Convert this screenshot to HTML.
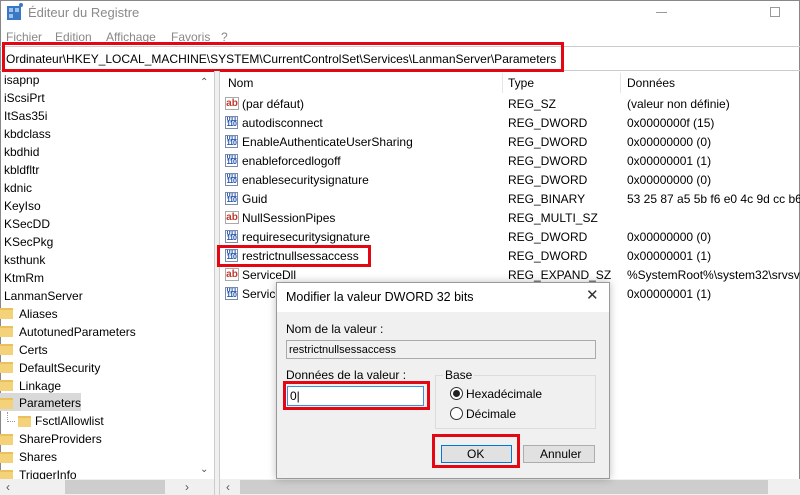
<!DOCTYPE html>
<html><head><meta charset="utf-8"><style>
*{margin:0;padding:0;box-sizing:border-box}
body{width:800px;height:495px;overflow:hidden;background:#fff;font-family:"Liberation Sans",sans-serif;font-size:12px;color:#000;position:relative}
.a{position:absolute;white-space:nowrap}
.t{line-height:16px}
.fold{position:absolute;width:13px;height:11px;background:#f3d27a;border-top:2px solid #e8c15a}
.ico{position:absolute;width:13px;height:13px;border:1px solid #7a8aa8;background:#fff;font-size:7px;line-height:5px;color:#1d4fa8;font-weight:bold;text-align:center;letter-spacing:-0.5px;overflow:hidden}
.ab{position:absolute;width:14px;height:13px;border:1px solid #aaa;background:#fff;color:#c0392b;font-size:10px;font-weight:bold;line-height:11px;text-align:center}
.red{position:absolute;border:3px solid #e30613}
</style></head><body>
<div class="a" style="left:0;top:0;width:800px;height:495px;border:1px solid #888"></div>
<div class="a" style="left:7px;top:6px;width:14px;height:14px;background:#3b78c4"></div>
<div class="a" style="left:9px;top:8px;width:4px;height:4px;background:#9cc3ee"></div>
<div class="a" style="left:15px;top:8px;width:4px;height:4px;background:#9cc3ee"></div>
<div class="a" style="left:9px;top:14px;width:4px;height:4px;background:#9cc3ee"></div>
<div class="a" style="left:19px;top:3px;width:4px;height:4px;background:#3b78c4;border-radius:2px"></div>
<div class="a t" style="left:28px;top:5px;font-size:13px;color:#8a8a8a">Éditeur du Registre</div>
<div class="a" style="left:656px;top:12px;width:11px;height:1px;background:#999"></div>
<div class="a" style="left:770px;top:7px;width:10px;height:10px;border:1px solid #999"></div>
<div class="a t" style="left:6px;top:29px;color:#888">Fichier</div>
<div class="a t" style="left:55px;top:29px;color:#888">Edition</div>
<div class="a t" style="left:106px;top:29px;color:#888">Affichage</div>
<div class="a t" style="left:171px;top:29px;color:#888">Favoris</div>
<div class="a t" style="left:221px;top:29px;color:#888">?</div>
<div class="a" style="left:0;top:46px;width:800px;height:1px;background:#ccc"></div>
<div class="a" style="left:0;top:70px;width:800px;height:1px;background:#ccc"></div>
<div class="a t" style="left:6px;top:51px">Ordinateur\HKEY_LOCAL_MACHINE\SYSTEM\CurrentControlSet\Services\LanmanServer\Parameters</div>
<div class="red" style="left:2px;top:42px;width:562px;height:30px"></div>
<!-- left tree -->
<div class="a t" style="left:4px;top:72px">isapnp</div>
<div class="a t" style="left:4px;top:90px">iScsiPrt</div>
<div class="a t" style="left:4px;top:108px">ItSas35i</div>
<div class="a t" style="left:4px;top:126px">kbdclass</div>
<div class="a t" style="left:4px;top:144px">kbdhid</div>
<div class="a t" style="left:4px;top:162px">kbldfltr</div>
<div class="a t" style="left:4px;top:180px">kdnic</div>
<div class="a t" style="left:4px;top:198px">KeyIso</div>
<div class="a t" style="left:4px;top:216px">KSecDD</div>
<div class="a t" style="left:4px;top:234px">KSecPkg</div>
<div class="a t" style="left:4px;top:252px">ksthunk</div>
<div class="a t" style="left:4px;top:270px">KtmRm</div>
<div class="a t" style="left:4px;top:288px">LanmanServer</div>
<div class="a" style="left:0;top:393px;width:81px;height:18px;background:#d9d9d9"></div>
<div class="fold" style="left:0;top:308px"></div><div class="a t" style="left:19px;top:306px">Aliases</div>
<div class="fold" style="left:0;top:326px"></div><div class="a t" style="left:19px;top:324px">AutotunedParameters</div>
<div class="fold" style="left:0;top:344px"></div><div class="a t" style="left:19px;top:342px">Certs</div>
<div class="fold" style="left:0;top:362px"></div><div class="a t" style="left:19px;top:360px">DefaultSecurity</div>
<div class="fold" style="left:0;top:380px"></div><div class="a t" style="left:19px;top:378px">Linkage</div>
<div class="fold" style="left:0;top:398px"></div><div class="a t" style="left:19px;top:395px">Parameters</div>
<div class="a" style="left:7px;top:412px;width:1px;height:10px;border-left:1px dotted #999"></div>
<div class="a" style="left:7px;top:421px;width:8px;height:1px;border-top:1px dotted #999"></div>
<div class="fold" style="left:18px;top:416px"></div><div class="a t" style="left:35px;top:413px">FsctlAllowlist</div>
<div class="fold" style="left:0;top:434px"></div><div class="a t" style="left:19px;top:431px">ShareProviders</div>
<div class="fold" style="left:0;top:452px"></div><div class="a t" style="left:19px;top:449px">Shares</div>
<div class="fold" style="left:0;top:470px"></div><div class="a t" style="left:19px;top:467px">TriggerInfo</div>
<div class="a" style="left:198px;top:72px;width:16px;height:408px;background:#fff"></div>
<div class="a t" style="left:200px;top:75px;font-size:10px;color:#555">&#8963;</div>
<div class="a t" style="left:200px;top:462px;font-size:10px;color:#555">&#8964;</div>
<div class="a" style="left:0;top:479px;width:214px;height:16px;background:#f0f0f0"></div>
<div class="a" style="left:65px;top:480px;width:100px;height:14px;background:#cdcdcd"></div>
<div class="a t" style="left:6px;top:479px;color:#555">&lsaquo;</div>
<div class="a t" style="left:185px;top:479px;color:#555">&rsaquo;</div>
<div class="a" style="left:214px;top:71px;width:6px;height:424px;background:#f0f0f0;border-left:1px solid #ccc;border-right:1px solid #ccc"></div>
<div class="a" style="left:502px;top:73px;width:1px;height:20px;background:#e5e5e5"></div>
<div class="a" style="left:620px;top:73px;width:1px;height:20px;background:#e5e5e5"></div>
<div class="a t" style="left:228px;top:75px">Nom</div>
<div class="a t" style="left:508px;top:75px">Type</div>
<div class="a t" style="left:627px;top:75px">Données</div>
<div class="ab" style="left:225px;top:97px">ab</div><div class="a t" style="left:242px;top:96px">(par défaut)</div><div class="a t" style="left:508px;top:96px">REG_SZ</div><div class="a t" style="left:627px;top:96px">(valeur non définie)</div>
<div class="ico" style="left:225px;top:116px">011<br>110</div><div class="a t" style="left:242px;top:115px">autodisconnect</div><div class="a t" style="left:508px;top:115px">REG_DWORD</div><div class="a t" style="left:627px;top:115px">0x0000000f (15)</div>
<div class="ico" style="left:225px;top:135px">011<br>110</div><div class="a t" style="left:242px;top:134px">EnableAuthenticateUserSharing</div><div class="a t" style="left:508px;top:134px">REG_DWORD</div><div class="a t" style="left:627px;top:134px">0x00000000 (0)</div>
<div class="ico" style="left:225px;top:154px">011<br>110</div><div class="a t" style="left:242px;top:153px">enableforcedlogoff</div><div class="a t" style="left:508px;top:153px">REG_DWORD</div><div class="a t" style="left:627px;top:153px">0x00000001 (1)</div>
<div class="ico" style="left:225px;top:173px">011<br>110</div><div class="a t" style="left:242px;top:172px">enablesecuritysignature</div><div class="a t" style="left:508px;top:172px">REG_DWORD</div><div class="a t" style="left:627px;top:172px">0x00000000 (0)</div>
<div class="ico" style="left:225px;top:192px">011<br>110</div><div class="a t" style="left:242px;top:191px">Guid</div><div class="a t" style="left:508px;top:191px">REG_BINARY</div><div class="a t" style="left:627px;top:191px">53 25 87 a5 5b f6 e0 4c 9d cc b6 8</div>
<div class="ab" style="left:225px;top:211px">ab</div><div class="a t" style="left:242px;top:210px">NullSessionPipes</div><div class="a t" style="left:508px;top:210px">REG_MULTI_SZ</div>
<div class="ico" style="left:225px;top:230px">011<br>110</div><div class="a t" style="left:242px;top:229px">requiresecuritysignature</div><div class="a t" style="left:508px;top:229px">REG_DWORD</div><div class="a t" style="left:627px;top:229px">0x00000000 (0)</div>
<div class="ico" style="left:225px;top:249px">011<br>110</div><div class="a t" style="left:242px;top:248px">restrictnullsessaccess</div><div class="a t" style="left:508px;top:248px">REG_DWORD</div><div class="a t" style="left:627px;top:248px">0x00000001 (1)</div>
<div class="red" style="left:217px;top:245px;width:154px;height:22px"></div>
<div class="ab" style="left:225px;top:268px">ab</div><div class="a t" style="left:242px;top:267px">ServiceDll</div><div class="a t" style="left:508px;top:267px">REG_EXPAND_SZ</div><div class="a t" style="left:627px;top:267px">%SystemRoot%\system32\srvsvc</div>
<div class="ico" style="left:225px;top:287px">011<br>110</div><div class="a t" style="left:242px;top:286px">Service</div><div class="a t" style="left:508px;top:286px">REG_DWORD</div><div class="a t" style="left:627px;top:286px">0x00000001 (1)</div>
<div class="a" style="left:220px;top:479px;width:580px;height:16px;background:#f0f0f0"></div>
<div class="a" style="left:240px;top:480px;width:528px;height:14px;background:#cdcdcd"></div>
<div class="a t" style="left:226px;top:479px;color:#555">&lsaquo;</div>
<div class="a" style="left:276px;top:282px;width:334px;height:197px;background:#f0f0f0;border:1px solid #999;box-shadow:0 0 8px rgba(0,0,0,0.25)"></div>
<div class="a" style="left:277px;top:283px;width:332px;height:29px;background:#fff"></div>
<div class="a t" style="left:286px;top:289px;font-size:12.5px">Modifier la valeur DWORD 32 bits</div>
<div class="a t" style="left:586px;top:288px;font-size:15px;color:#333">✕</div>
<div class="a t" style="left:286px;top:321px">Nom de la valeur :</div>
<div class="a" style="left:286px;top:340px;width:310px;height:19px;background:#f0f0f0;border:1px solid #aaa"></div>
<div class="a t" style="left:289px;top:342px;font-size:11px">restrictnullsessaccess</div>
<div class="a t" style="left:286px;top:367px">Données de la valeur :</div>
<div class="a" style="left:287px;top:386px;width:137px;height:20px;background:#fff;border:1px solid #3c8ede"></div>
<div class="a t" style="left:290px;top:388px">0|</div>
<div class="red" style="left:283px;top:381px;width:147px;height:29px"></div>
<div class="a" style="left:435px;top:375px;width:161px;height:54px;border:1px solid #dcdcdc"></div>
<div class="a t" style="left:443px;top:367px;background:#f0f0f0;padding:0 2px">Base</div>
<div class="a" style="left:450px;top:387px;width:13px;height:13px;border:1px solid #333;border-radius:50%;background:#fff"></div>
<div class="a" style="left:453px;top:390px;width:7px;height:7px;border-radius:50%;background:#222"></div>
<div class="a t" style="left:466px;top:386px">Hexadécimale</div>
<div class="a" style="left:450px;top:407px;width:13px;height:13px;border:1px solid #333;border-radius:50%;background:#fff"></div>
<div class="a t" style="left:466px;top:406px">Décimale</div>
<div class="a" style="left:441px;top:445px;width:71px;height:18px;background:#e1e1e1;border:1px solid #0078d7"></div>
<div class="a t" style="left:467px;top:446px">OK</div>
<div class="red" style="left:432px;top:434px;width:88px;height:34px"></div>
<div class="a" style="left:523px;top:445px;width:72px;height:18px;background:#e1e1e1;border:1px solid #adadad"></div>
<div class="a t" style="left:540px;top:446px">Annuler</div>
</body></html>
